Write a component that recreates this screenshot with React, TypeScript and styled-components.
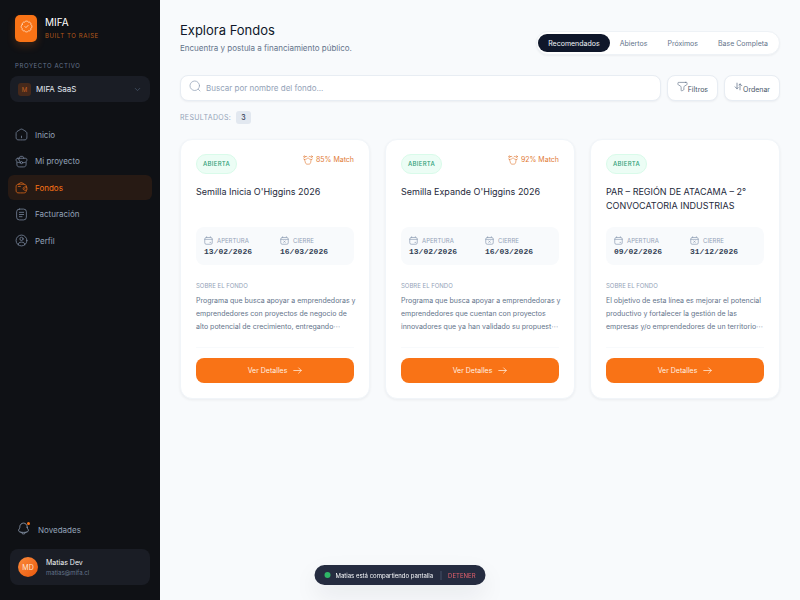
import React from 'react';
import styled, { createGlobalStyle } from 'styled-components';
import { BadgeCheck, ChevronDown } from 'lucide-react';

const GlobalStyle = createGlobalStyle`
  *, *::before, *::after { box-sizing: border-box; }
  body {
    margin: 0;
    font-family: Inter, "DejaVu Sans", sans-serif;
    font-size: 8px;
    color: #1e293b;
    background: #f8fafc;
  }
  h1, h2, h3, h4, p, ul, dl, dd { margin: 0; padding: 0; }
  button, input { font: inherit; color: inherit; }
  button { cursor: pointer; border: 0; background: none; padding: 0; }
  a { color: inherit; text-decoration: none; }
`;

const Glyph = styled.svg<{ $size?: number; $weight?: number }>`
  width: ${(p) => p.$size ?? 12}px;
  height: ${(p) => p.$size ?? 12}px;
  flex: none;
  fill: none;
  stroke: currentColor;
  stroke-width: ${(p) => p.$weight ?? 1.5};
  stroke-linecap: round;
  stroke-linejoin: round;
`;

const HomeIcon = () => (
  <Glyph viewBox="0 0 24 24" $size={13} aria-hidden>
    <path d="M2 12.2C2 9.9 2 8.8 2.5 7.8 3 6.9 4 6.3 5.9 5.1l2-1.2C9.9 2.6 10.9 2 12 2s2.1.6 4.1 1.9l2 1.2c1.9 1.2 2.9 1.8 3.4 2.7.5 1 .5 2.1.5 4.4v1.5c0 3.9 0 5.9-1.2 7.1C19.7 22 17.8 22 14 22h-4c-3.8 0-5.7 0-6.8-1.200C2 19.600 2 17.600 2 13.700z" />
    <path d="M12 15v3" />
  </Glyph>
);
const CaseIcon = () => (
  <Glyph viewBox="0 0 24 24" $size={13} aria-hidden>
    <path d="M8 6V5.500C8 3.500 9 2.500 11 2.500h2c2 0 3 1 3 3V6" />
    <path d="M5 6h14c2 0 3 1.200 3 3 0 2.500-1.500 4-4 4.700l-3.700.8M9.700 14.500 6 13.700C3.500 13 2 11.500 2 9c0-1.800 1-3 3-3z" />
    <path d="M3.500 13.500V17c0 3.500 1.500 5 5 5h7c3.500 0 5-1.500 5-5v-3.500" />
    <circle cx="12" cy="14" r="2" />
  </Glyph>
);
const WalletIcon = () => (
  <Glyph viewBox="0 0 24 24" $size={13} aria-hidden>
    <path d="M6 10h4M20.800 11H18.200C16.400 11 15 12.300 15 14s1.400 3 3.200 3h2.600c.7 0 1.200-.5 1.200-1.200v-3.600c0-.7-.5-1.200-1.200-1.200z" />
    <path d="M21 11c-.1-1.900-.3-3-1.200-3.800C18.700 6 16.800 6 13 6h-3C6.200 6 4.300 6 3.200 7.200 2 8.300 2 10.200 2 14s0 5.700 1.200 6.800C4.300 22 6.200 22 10 22h3c3.800 0 5.700 0 6.800-1.200.8-.8 1.100-1.900 1.200-3.800" />
    <path d="m6 6 3.700-2.500c1.100-.7 2.500-.7 3.600 0L17 6M18 14h.01" />
  </Glyph>
);
const BillIcon = () => (
  <Glyph viewBox="0 0 24 24" $size={13} aria-hidden>
    <rect x="3" y="2" width="18" height="20" rx="5" />
    <path d="M8 8h8M8 12h8M8 16h5" />
  </Glyph>
);
const UserIcon = () => (
  <Glyph viewBox="0 0 24 24" $size={13} aria-hidden>
    <circle cx="12" cy="12" r="10" />
    <circle cx="12" cy="9" r="3" />
    <path d="M18 20c-.2-2.900-1.100-5-6-5s-5.800 2.100-6 5" />
  </Glyph>
);
const BellIcon = () => (
  <Glyph viewBox="0 0 24 24" $size={13} aria-hidden>
    <path d="M18.800 9.700V9C18.800 5.100 15.700 2 12 2S5.200 5.100 5.200 9v.7c0 .8-.2 1.700-.7 2.400l-1.100 1.800c-1 1.600-.2 3.800 1.500 4.300 4.600 1.400 9.500 1.400 14.100 0 1.800-.5 2.600-2.700 1.600-4.300l-1.100-1.800c-.4-.7-.7-1.600-.7-2.400z" />
    <path d="M7.500 19c.7 1.800 2.400 3 4.500 3s3.800-1.200 4.500-3" />
  </Glyph>
);
const SearchIcon = () => (
  <Glyph viewBox="0 0 24 24" $size={12} aria-hidden>
    <circle cx="11.500" cy="11.500" r="9.500" />
    <path d="m18.500 18.500 3.500 3.500" />
  </Glyph>
);
const FilterIcon = () => (
  <Glyph viewBox="0 0 24 24" $size={11} aria-hidden>
    <path d="M19 3H5c-1.400 0-2.100 0-2.600.4C2 3.900 2 4.500 2 5.800c0 1 0 1.500.2 1.900.3.400.7.700 1.600 1.200l2.700 1.500c.9.600 1.400.900 1.700 1.200.6.700.8 1.200.8 2.600v5c0 1.200 0 1.800.5 2.100s1 .1 2.100-.3c1.200-.4 2.100-.8 2.600-1.200.6-.5.800-.9.800-2v-3.600c0-1.400.2-1.900.8-2.600.3-.3.800-.6 1.700-1.200l2.700-1.500c.9-.5 1.300-.8 1.600-1.200.2-.4.2-.9.200-1.900 0-1.300 0-1.900-.4-2.400C21.100 3 20.400 3 19 3z" />
  </Glyph>
);
const SortIcon = () => (
  <Glyph viewBox="0 0 24 24" $size={9} $weight={2} aria-hidden>
    <path d="M8 3v15M3 13l5 5 3-3M16 21V5l5 5M16 5l-3 3" />
  </Glyph>
);
const MatchIcon = () => (
  <Glyph viewBox="0 0 24 24" $size={10} aria-hidden>
    <path d="M4.500 10.500c3 .3 5-1.500 7.500-4 2.500 2.500 4.500 4.300 7.500 4l-1 7c-.5 3-2 4.500-4.500 4.500h-4c-2.500 0-4-1.500-4.500-4.500z" />
    <circle cx="3.500" cy="4" r="2" />
    <circle cx="20.500" cy="4" r="2" />
    <path d="M1.500 9.500 4 11M22.500 9.500 20 11M8 3.500h1M15 3.500h1" />
  </Glyph>
);
const CalendarIcon = ({ end = false }: { end?: boolean }) => (
  <Glyph viewBox="0 0 24 24" $size={9} $weight={2} aria-hidden>
    <rect x="2" y="4" width="20" height="18" rx="4" />
    <path d="M7 4V2M17 4V2M2 9h20" />
    <path d={end ? 'm10 13 4 4M14 13l-4 4' : 'M16 17h2'} />
  </Glyph>
);
const ArrowIcon = () => (
  <Glyph viewBox="0 0 24 24" $size={9} $weight={2} aria-hidden>
    <path d="M2 12h20M15 5l7 7-7 7" />
  </Glyph>
);

const Shell = styled.div`
  display: grid;
  grid-template-columns: 160px minmax(0, 1fr);
  min-height: 100vh;
`;

const Sidebar = styled.aside`
  display: flex;
  flex-direction: column;
  padding: 15px 10px;
  background: #0f1115;
  color: #94a3b8;
`;
const Brand = styled.a`
  display: flex;
  align-items: center;
  gap: 8px;
  padding-left: 5px;
`;
const Logo = styled.span`
  display: grid;
  justify-items: center;
  width: 22px;
  height: 27px;
  padding-top: 5px;
  border-radius: 5px;
  background: #f97316;
  color: #ffe3cb;
  box-shadow: 0 4px 8px rgba(249, 115, 22, 0.2);
`;
const BrandText = styled.span`
  display: grid;
`;
const BrandName = styled.strong`
  font-size: 10px;
  line-height: 15px;
  font-weight: 400;
  color: #fff;
`;
const Tagline = styled.span`
  font-size: 6px;
  line-height: 12px;
  letter-spacing: 0.1em;
  color: #b45a1b;
`;
const SideLabel = styled.h2`
  margin: 19px 0 5px;
  padding-left: 5px;
  font-size: 6px;
  line-height: 10px;
  font-weight: 400;
  letter-spacing: 0.1em;
  color: #64748b;
`;
const ProjectButton = styled.button`
  display: flex;
  align-items: center;
  gap: 5px;
  height: 26px;
  padding: 0 8px;
  border-radius: 8px;
  background: #1a1d25;
  color: #e2e8f0;
  font-size: 8px;

  svg { margin-left: auto; color: #475569; }
`;
const ProjectMark = styled.span`
  display: grid;
  place-items: center;
  width: 13px;
  height: 13px;
  border-radius: 3px;
  background: #46291b;
  color: #c2601f;
  font-size: 6px;
`;
const Nav = styled.nav`
  display: grid;
  align-content: space-between;
  min-height: 131px;
  margin: 20px -2px 0;
`;
const NavLink = styled.a<{ $active?: boolean }>`
  display: flex;
  align-items: center;
  gap: 7px;
  height: 25px;
  padding: 0 7px;
  border-radius: 6px;
  font-size: 8px;
  color: ${(p) => (p.$active ? '#f97316' : '#94a3b8')};
  background: ${(p) => (p.$active ? '#271a14' : 'transparent')};

  svg { color: ${(p) => (p.$active ? '#d9661a' : '#76849a')}; }
`;
const SideFooter = styled.div`
  display: grid;
  gap: 10px;
  margin-top: auto;
`;
const NewsLink = styled.a`
  display: flex;
  align-items: center;
  gap: 8px;
  height: 18px;
  padding-left: 7px;
  font-size: 8px;
`;
const BellWrap = styled.span`
  position: relative;
  display: flex;
  padding-bottom: 4px;

  &::after {
    content: '';
    position: absolute;
    top: 0;
    right: 0;
    width: 3px;
    height: 3px;
    border-radius: 50%;
    background: #f97316;
  }
`;
const UserCard = styled.button`
  display: flex;
  align-items: center;
  gap: 8px;
  height: 36px;
  padding: 0 8px;
  border-radius: 8px;
  background: #1a1d25;
  text-align: left;
`;
const Avatar = styled.span`
  display: grid;
  place-items: center;
  width: 20px;
  height: 20px;
  border-radius: 50%;
  background: linear-gradient(135deg, #fb8b3c, #ea580c);
  color: #ffe8d6;
  font-size: 7px;
`;
const UserText = styled.span`
  display: grid;
  font-size: 7px;
  line-height: 10px;
  color: #f1f5f9;
`;
const UserMail = styled.span`
  font-size: 6px;
  line-height: 9px;
  color: #64748b;
`;

const Main = styled.main`
  padding: 20px;
`;
const PageHeader = styled.header`
  display: flex;
  justify-content: space-between;
  align-items: flex-end;
`;
const Title = styled.h1`
  font-size: 13px;
  line-height: 20px;
  font-weight: 400;
  color: #0f172a;
`;
const Subtitle = styled.p`
  margin-top: 2px;
  font-size: 8px;
  line-height: 13px;
  color: #64748b;
`;
const Tabs = styled.div`
  display: flex;
  align-items: center;
  height: 24px;
  padding: 0 1px;
  border: 1px solid #eef2f6;
  border-radius: 12px;
  background: #fff;
  box-shadow: 0 1px 2px rgba(15, 23, 42, 0.05);
`;
const Tab = styled.button<{ $active?: boolean }>`
  height: 18px;
  padding: 0 10px;
  border-radius: 9px;
  font-size: 7px;
  color: ${(p) => (p.$active ? '#f1f5f9' : '#64748b')};
  background: ${(p) => (p.$active ? '#0f172a' : 'transparent')};
`;
const Toolbar = styled.div`
  display: flex;
  gap: 6px;
  margin-top: 20px;
`;
const SearchBox = styled.label`
  display: flex;
  flex: 1;
  align-items: center;
  gap: 5px;
  height: 26px;
  padding: 0 8px;
  border: 1px solid #e8edf3;
  border-radius: 8px;
  background: #fff;
  color: #94a3b8;
  box-shadow: 0 1px 2px rgba(15, 23, 42, 0.05);

  svg { margin-bottom: 4px; }
`;
const SearchInput = styled.input`
  flex: 1;
  min-width: 0;
  padding: 0;
  border: 0;
  outline: 0;
  background: none;
  font-size: 8px;
  color: #1e293b;

  &::placeholder { color: #94a3b8; opacity: 1; }
`;
const ToolButton = styled.button`
  display: flex;
  align-items: center;
  height: 26px;
  padding: 0 9px;
  border: 1px solid #e8edf3;
  border-radius: 8px;
  background: #fff;
  font-size: 7px;
  color: #475569;
  box-shadow: 0 1px 2px rgba(15, 23, 42, 0.05);

  svg { margin-bottom: 4px; color: #64748b; }
  span { margin-top: 3px; }
`;
const Results = styled.p`
  display: flex;
  align-items: center;
  gap: 5px;
  margin: 10px 0 15px;
  font-size: 7px;
  line-height: 13px;
  letter-spacing: 0.05em;
  color: #94a3b8;
`;
const Count = styled.strong`
  padding: 0 5px;
  border-radius: 3px;
  background: #e2e8f0;
  font-weight: 500;
  color: #334155;
`;
const Cards = styled.div`
  display: grid;
  grid-template-columns: repeat(3, minmax(0, 1fr));
  gap: 15px;
`;
const Card = styled.article`
  display: flex;
  flex-direction: column;
  padding: 14px 15px 15px;
  border: 1px solid #f1f5f9;
  border-radius: 12px;
  background: #fff;
  box-shadow: 0 1px 3px rgba(15, 23, 42, 0.06);
`;
const CardTop = styled.div`
  display: flex;
  align-items: flex-start;
  justify-content: space-between;
`;
const Status = styled.span`
  padding: 0 6px;
  border: 1px solid #d9fbea;
  border-radius: 10px;
  background: #ecfdf5;
  font-size: 6px;
  line-height: 18px;
  font-weight: 500;
  letter-spacing: 0.05em;
  color: #2c9d78;
`;
const Match = styled.span`
  display: flex;
  align-items: center;
  gap: 3px;
  font-size: 7px;
  line-height: 11px;
  color: #e17a35;
`;
const CardTitle = styled.h3`
  min-height: 28px;
  margin-top: 11px;
  font-size: 9px;
  line-height: 14px;
  font-weight: 400;
  color: #1e293b;
`;
const Dates = styled.dl`
  display: grid;
  grid-template-columns: 1fr 1fr;
  gap: 10px;
  height: 38px;
  margin-top: 14px;
  padding: 8px;
  border-radius: 8px;
  background: #f8fafc;
`;
const DateLabel = styled.dt`
  display: flex;
  align-items: center;
  gap: 4px;
  font-size: 6px;
  line-height: 11px;
  color: #94a3b8;
`;
const DateValue = styled.dd`
  font-family: "Liberation Mono", monospace;
  font-size: 8px;
  line-height: 11px;
  font-weight: 700;
  color: #334155;
`;
const SectionLabel = styled.h4`
  margin: 16px 0 4px;
  font-size: 6px;
  line-height: 9px;
  font-weight: 400;
  color: #94a3b8;
`;
const Description = styled.p`
  font-size: 7px;
  line-height: 13px;
  color: #64748b;
`;
const Line = styled.span`
  display: block;
  white-space: nowrap;
`;
const CardAction = styled.div`
  margin-top: 14px;
  padding-top: 10px;
  border-top: 1px solid #f8fafc;
`;
const DetailsButton = styled.button`
  display: flex;
  align-items: center;
  justify-content: center;
  gap: 6px;
  width: 100%;
  height: 25px;
  border-radius: 8px;
  background: #f97316;
  font-size: 7px;
  color: #fff0e2;
`;
const ShareToast = styled.div`
  position: fixed;
  left: 50%;
  bottom: 15px;
  display: flex;
  align-items: center;
  gap: 5px;
  height: 20px;
  padding: 0 10px;
  transform: translateX(-50%);
  border-radius: 10px;
  background: #252c40;
  font-size: 6px;
  white-space: nowrap;
  color: #f8fafc;
  box-shadow: 0 10px 25px rgba(15, 23, 42, 0.08);
`;
const LiveDot = styled.span`
  width: 6px;
  height: 6px;
  border-radius: 50%;
  background: #2fb667;
`;
const StopButton = styled.button`
  height: 9px;
  margin-left: 2px;
  padding-left: 7px;
  border-left: 1px solid #475069;
  font-size: 6px;
  color: #e4606c;
`;

const navItems = [
  { label: 'Inicio', icon: <HomeIcon /> },
  { label: 'Mi proyecto', icon: <CaseIcon /> },
  { label: 'Fondos', icon: <WalletIcon />, active: true },
  { label: 'Facturación', icon: <BillIcon /> },
  { label: 'Perfil', icon: <UserIcon /> },
];
const tabs = ['Recomendados', 'Abiertos', 'Próximos', 'Base Completa'];

interface Fund {
  title: string;
  match?: string;
  opens: string;
  closes: string;
  summary: string[];
}
const funds: Fund[] = [
  {
    title: "Semilla Inicia O'Higgins 2026",
    match: '85% Match',
    opens: '13/02/2026',
    closes: '16/03/2026',
    summary: [
      'Programa que busca apoyar a emprendedoras y',
      'emprendedores con proyectos de negocio de',
      'alto potencial de crecimiento, entregando⋯',
    ],
  },
  {
    title: "Semilla Expande O'Higgins 2026",
    match: '92% Match',
    opens: '13/02/2026',
    closes: '16/03/2026',
    summary: [
      'Programa que busca apoyar a emprendedoras y',
      'emprendedores que cuentan con proyectos',
      'innovadores que ya han validado su propuest⋯',
    ],
  },
  {
    title: 'PAR – REGIÓN DE ATACAMA – 2° CONVOCATORIA INDUSTRIAS',
    opens: '09/02/2026',
    closes: '31/12/2026',
    summary: [
      'El objetivo de esta línea es mejorar el potencial',
      'productivo y fortalecer la gestión de las',
      'empresas y/o emprendedores de un territorio⋯',
    ],
  },
];

const FundCard = ({ fund }: { fund: Fund }) => (
  <Card>
    <CardTop>
      <Status>ABIERTA</Status>
      {fund.match && (
        <Match>
          <MatchIcon />
          {fund.match}
        </Match>
      )}
    </CardTop>
    <CardTitle>{fund.title}</CardTitle>
    <Dates>
      <div>
        <DateLabel><CalendarIcon />APERTURA</DateLabel>
        <DateValue>{fund.opens}</DateValue>
      </div>
      <div>
        <DateLabel><CalendarIcon end />CIERRE</DateLabel>
        <DateValue>{fund.closes}</DateValue>
      </div>
    </Dates>
    <SectionLabel>SOBRE EL FONDO</SectionLabel>
    <Description>
      {fund.summary.map((line) => <Line key={line}>{line}</Line>)}
    </Description>
    <CardAction>
      <DetailsButton type="button">Ver Detalles <ArrowIcon /></DetailsButton>
    </CardAction>
  </Card>
);

export default function App() {
  return (
    <Shell>
      <GlobalStyle />
      <Sidebar>
        <Brand href="#">
          <Logo><BadgeCheck size={13} strokeWidth={1.5} /></Logo>
          <BrandText>
            <BrandName>MIFA</BrandName>
            <Tagline>BUILT TO RAISE</Tagline>
          </BrandText>
        </Brand>
        <SideLabel>PROYECTO ACTIVO</SideLabel>
        <ProjectButton type="button">
          <ProjectMark>M</ProjectMark>
          MIFA SaaS
          <ChevronDown size={9} />
        </ProjectButton>
        <Nav>
          {navItems.map((item) => (
            <NavLink key={item.label} href="#" $active={item.active}>
              {item.icon}
              {item.label}
            </NavLink>
          ))}
        </Nav>
        <SideFooter>
          <NewsLink href="#">
            <BellWrap><BellIcon /></BellWrap>
            Novedades
          </NewsLink>
          <UserCard type="button">
            <Avatar>MD</Avatar>
            <UserText>
              Matias Dev
              <UserMail>matias@mifa.cl</UserMail>
            </UserText>
          </UserCard>
        </SideFooter>
      </Sidebar>
      <Main>
        <PageHeader>
          <div>
            <Title>Explora Fondos</Title>
            <Subtitle>Encuentra y postula a financiamiento público.</Subtitle>
          </div>
          <Tabs>
            {tabs.map((tab, i) => (
              <Tab key={tab} type="button" $active={i === 0}>{tab}</Tab>
            ))}
          </Tabs>
        </PageHeader>
        <Toolbar>
          <SearchBox>
            <SearchIcon />
            <SearchInput type="search" aria-label="Buscar por nombre del fondo" placeholder="Buscar por nombre del fondo..." />
          </SearchBox>
          <ToolButton type="button"><FilterIcon /><span>Filtros</span></ToolButton>
          <ToolButton type="button"><SortIcon /><span>Ordenar</span></ToolButton>
        </Toolbar>
        <Results>RESULTADOS: <Count>3</Count></Results>
        <Cards>
          {funds.map((fund) => <FundCard key={fund.title} fund={fund} />)}
        </Cards>
      </Main>
      <ShareToast role="status">
        <LiveDot />
        Matias está compartiendo pantalla
        <StopButton type="button">DETENER</StopButton>
      </ShareToast>
    </Shell>
  );
}
